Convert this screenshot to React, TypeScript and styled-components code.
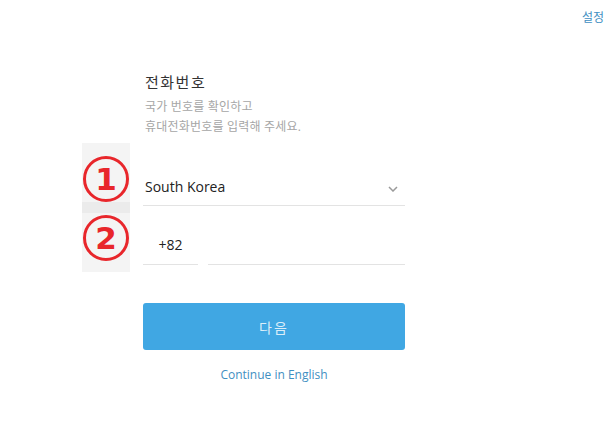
import * as React from 'react'
import styled, {createGlobalStyle} from 'styled-components'

const GlobalStyle = createGlobalStyle`
    body {
        margin: 0;
        background: #ffffff;
        font-family: "Open Sans", "Noto Sans CJK KR", sans-serif;
    }
`

export default function App() {
    return (
        <>
            <GlobalStyle />
            <Page>
                <Header>
                    <SettingsLink>설정</SettingsLink>
                </Header>
                <Form>
                    <Title>전화번호</Title>
                    <Subtitle>
                        국가 번호를 확인하고
                        <br />
                        휴대전화번호를 입력해 주세요.
                    </Subtitle>
                    <FieldsArea>
                        <MarkerColumn>
                            <MarkerBox $align="flex-end">
                                <Circle>1</Circle>
                            </MarkerBox>
                            <MarkerGap />
                            <MarkerBox $align="flex-start">
                                <Circle>2</Circle>
                            </MarkerBox>
                        </MarkerColumn>
                        <Fields>
                            <CountryField>
                                <span>South Korea</span>
                                <Chevron width="10" height="6" viewBox="0 0 10 6">
                                    <path d="M1 1l4 4 4-4" fill="none" stroke="#9a9a9a" strokeWidth="1.5" />
                                </Chevron>
                            </CountryField>
                            <PhoneRow>
                                <CodeField>+82</CodeField>
                                <NumberField />
                            </PhoneRow>
                        </Fields>
                    </FieldsArea>
                    <NextButton>다음</NextButton>
                    <EnglishLink>Continue in English</EnglishLink>
                </Form>
            </Page>
        </>
    )
}

const Page = styled('div')`
    width: 616px;
    height: 440px;
    box-sizing: border-box;
    padding-top: 8px;
`

const Header = styled('div')`
    display: flex;
    justify-content: flex-end;
    padding-right: 12px;
    height: 20px;
`

const SettingsLink = styled('a')`
    font-size: 12px;
    line-height: 20px;
    color: #3f8fc2;
    cursor: pointer;
`

const Form = styled('div')`
    display: flex;
    flex-direction: column;
    margin: 44px 0 0 82px;
    width: 323px;
`

const Title = styled('div')`
    padding-left: 63px;
    font-size: 15px;
    line-height: 20px;
    letter-spacing: 1.5px;
    color: #333333;
`

const Subtitle = styled('div')`
    margin-top: 5px;
    padding-left: 63px;
    font-size: 12px;
    line-height: 20px;
    letter-spacing: 0.2px;
    color: #a6a6a6;
`

const FieldsArea = styled('div')`
    display: flex;
    align-items: flex-start;
    gap: 13px;
    margin-top: 6px;
`

const MarkerColumn = styled('div')`
    display: flex;
    flex-direction: column;
    width: 48px;
`

const MarkerBox = styled('div')<{$align: string}>`
    height: 59px;
    box-sizing: border-box;
    background: #f4f4f4;
    display: flex;
    align-items: ${p => p.$align};
    justify-content: center;
    padding: 2px 0 0 0;
`

const MarkerGap = styled('div')`
    height: 11px;
    background: #ebebeb;
`

const Circle = styled('div')`
    width: 40px;
    height: 40px;
    border: 3px solid #e8262b;
    border-radius: 50%;
    display: flex;
    align-items: center;
    justify-content: center;
    color: #e8262b;
    font-family: "DejaVu Sans", sans-serif;
    font-weight: bold;
    font-size: 31px;
    line-height: 1;
`

const Fields = styled('div')`
    display: flex;
    flex-direction: column;
    width: 262px;
`

const CountryField = styled('div')`
    height: 63px;
    box-sizing: border-box;
    display: flex;
    align-items: flex-end;
    justify-content: space-between;
    padding: 0 7px 8px 2px;
    border-bottom: 1px solid #e3e3e3;
    font-size: 14px;
    line-height: 20px;
    color: #222222;
`

const Chevron = styled('svg')`
    margin-bottom: 5px;
`

const PhoneRow = styled('div')`
    display: flex;
    gap: 10px;
    height: 59px;
`

const CodeField = styled('div')`
    width: 55px;
    box-sizing: border-box;
    display: flex;
    align-items: flex-end;
    justify-content: center;
    padding-bottom: 9px;
    border-bottom: 1px solid #e3e3e3;
    font-size: 14px;
    line-height: 20px;
    color: #222222;
`

const NumberField = styled('div')`
    flex: 1;
    border-bottom: 1px solid #e3e3e3;
`

const NextButton = styled('button')`
    margin: 31px 0 0 61px;
    width: 262px;
    height: 47px;
    border: none;
    border-radius: 3px;
    background: #40a7e3;
    color: rgba(255, 255, 255, 0.82);
    font-family: "Open Sans", "Noto Sans CJK KR", sans-serif;
    font-size: 14px;
    letter-spacing: 2px;
    cursor: pointer;
`

const EnglishLink = styled('a')`
    margin: 15px 0 0 61px;
    width: 262px;
    text-align: center;
    font-size: 12px;
    line-height: 20px;
    color: #3f8fc2;
    cursor: pointer;
`
